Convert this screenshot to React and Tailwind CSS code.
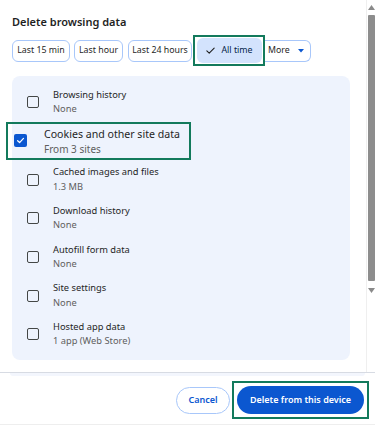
import React from "react";

const FONT = { fontFamily: '"Noto Sans", "Open Sans", Arial, sans-serif' };

const ranges = [
  { label: "Last 15 min", w: "w-[58px] mr-[4px]" },
  { label: "Last hour", w: "w-[49px] mr-[5px]" },
  { label: "Last 24 hours", w: "w-[64px] mr-[1px]" },
];

const items = [
  { title: "Browsing history", sub: "None" },
  { title: "Cookies and other site data", sub: "From 3 sites", checked: true },
  { title: "Cached images and files", sub: "1.3 MB" },
  { title: "Download history", sub: "None" },
  { title: "Autofill form data", sub: "None" },
  { title: "Site settings", sub: "None" },
  { title: "Hosted app data", sub: "1 app (Web Store)" },
];

const Checkbox = ({ checked }) =>
  checked ? (
    <span className="flex h-[13px] w-[13px] items-center justify-center rounded-[2px] bg-[#0b57d0]">
      <svg width="9" height="9" viewBox="0 0 10 10" fill="none">
        <path d="M1.8 5.2l2.2 2.1 4.3-4.6" stroke="#fff" strokeWidth="1.4" strokeLinecap="round" strokeLinejoin="round" />
      </svg>
    </span>
  ) : (
    <span className="block h-[12px] w-[12px] rounded-[2px] border-[1.5px] border-[#444746]" />
  );

const Row = ({ item }) => {
  if (item.checked) {
    return (
      <div className="relative h-[38.67px]">
        <div className="absolute left-[-6px] top-[0px] flex h-[38px] w-[185px] items-center border-2 border-[#137a5c] pl-[6px]">
          <Checkbox checked />
          <div className="ml-[17px] mt-[2px] flex flex-col whitespace-nowrap leading-none">
            <span className="text-[10.6px] text-[#1f1f1f]">{item.title}</span>
            <span className="mt-[4px] text-[10px] text-[#5e5e5e]">{item.sub}</span>
          </div>
        </div>
      </div>
    );
  }
  return (
    <div className="flex h-[38.67px] items-center pl-[15px]">
      <Checkbox />
      <div className="ml-[14px] -mt-[1px] flex flex-col whitespace-nowrap leading-none">
        <span className="text-[9.3px] text-[#1f1f1f]">{item.title}</span>
        <span className="mt-[5px] text-[9.3px] text-[#5e5e5e]">{item.sub}</span>
      </div>
    </div>
  );
};

export default function App() {
  return (
    <div style={FONT} className="relative h-[427px] w-[375px] overflow-hidden bg-white">
      <div className="flex h-[372px]">
        <div className="flex-1">
          <h1 className="pl-3 pt-[14px] text-[11px] font-semibold leading-[16px] text-[#1f1f1f]">
            Delete browsing data
          </h1>

          <div className="mt-[5px] flex items-center pl-3">
            {ranges.map((r) => (
              <span
                key={r.label}
                className={`${r.w} flex h-[22px] items-center justify-center whitespace-nowrap rounded-[6px] border border-[#a8c7fa] text-[8.8px] text-[#1f1f1f]`}
              >
                {r.label}
              </span>
            ))}
            <span className="flex h-[31px] w-[72px] items-center justify-center border-2 border-[#137a5c]">
              <span className="flex h-[25px] w-[65px] items-center justify-center whitespace-nowrap rounded-[6px] bg-[#d3e3fd] text-[8.8px] text-[#041e49]">
                <svg width="11" height="11" viewBox="0 0 12 12" fill="none" className="mr-[5px]">
                  <path d="M2 6.3l2.6 2.5L10 3.4" stroke="#1f1f1f" strokeWidth="1.2" strokeLinecap="round" strokeLinejoin="round" />
                </svg>
                All time
              </span>
            </span>
            <span className="flex h-[22px] w-[46px] items-center rounded-r-[6px] border border-l-0 border-[#a8c7fa] pl-[3px] text-[8.8px] text-[#1f1f1f]">
              More
              <svg width="6" height="4" viewBox="0 0 6 4" className="ml-[8px]">
                <path d="M0 0h6L3 3.5z" fill="#0b57d0" />
              </svg>
            </span>
          </div>

          <div className="ml-3 mt-[10px] w-[338px] rounded-[8px] bg-[#eef3fd] pb-[6px] pt-[7px]">
            {items.map((it) => (
              <Row key={it.title} item={it} />
            ))}
          </div>
        </div>

        <div className="flex w-[9px] flex-col items-center border-l border-[#efefef] pt-[5px]">
          <svg width="7" height="5" viewBox="0 0 7 5" className="ml-[1px]">
            <path d="M0 5h7L3.5 0z" fill="#8a8a8a" />
          </svg>
          <div className="ml-[1px] mt-[5px] h-[266px] w-[7px] rounded-[1px] bg-[#8d8d8d]" />
          <svg width="7" height="5" viewBox="0 0 7 5" className="ml-[1px] mt-[7px]">
            <path d="M0 0h7L3.5 5z" fill="#8a8a8a" />
          </svg>
        </div>
      </div>

      <div className="h-px w-full bg-[#d7dbe3]" />
      <div className="mx-[10px] h-[3px] rounded-b bg-[#f3f6fd]" />

      <div className="flex items-center justify-end pr-[6px] pt-[5px]">
        <button className="mr-[2px] h-[27px] w-[54px] rounded-full border border-[#a8c7fa] text-[9px] font-semibold text-[#0b57d0]">
          Cancel
        </button>
        <div className="border-2 border-[#137a5c] p-[3px]">
          <button className="block h-[28px] w-[127px] whitespace-nowrap rounded-full bg-[#0b57d0] text-[9px] font-semibold text-white">
            Delete from this device
          </button>
        </div>
      </div>

      <div className="absolute bottom-[2px] left-0 h-px w-full bg-[#eeeeee]" />
    </div>
  );
}
